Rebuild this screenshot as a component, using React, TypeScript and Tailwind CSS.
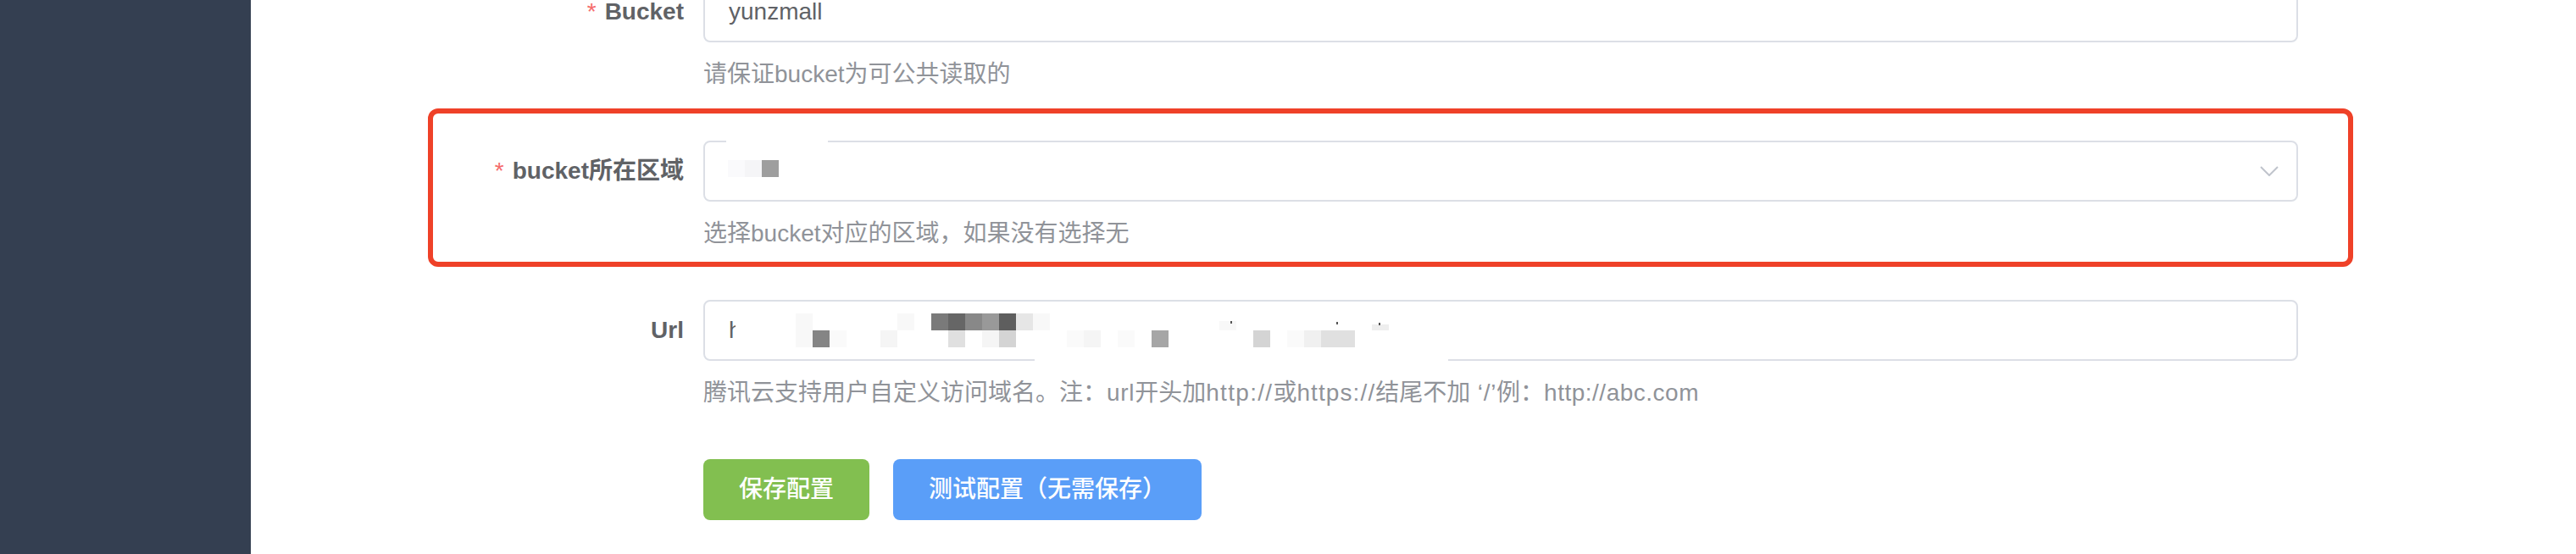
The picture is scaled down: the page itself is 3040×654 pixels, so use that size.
import React from "react";

const urlBlocks: [number, number, number, number, string][] = [
  // row 1
  [107, 14, 20, 20, "#f8f8f8"],
  [227, 14, 20, 20, "#f8f8f8"],
  [267, 14, 20, 20, "#7a7a7a"],
  [287, 14, 20, 20, "#666666"],
  [307, 14, 20, 20, "#888888"],
  [327, 14, 20, 20, "#999999"],
  [347, 14, 20, 20, "#5e5e5e"],
  [367, 14, 20, 20, "#e6e6e6"],
  [387, 14, 20, 20, "#f8f8f8"],
  [607, 23, 20, 11, "#f8f8f8"],
  [787, 27, 20, 7, "#eeeeee"],
  // row 2
  [107, 34, 20, 20, "#f8f8f8"],
  [127, 34, 20, 20, "#858585"],
  [147, 34, 20, 20, "#fafafa"],
  [207, 34, 20, 20, "#f5f5f5"],
  [287, 34, 20, 20, "#e0e0e0"],
  [327, 34, 20, 20, "#f5f5f5"],
  [347, 34, 20, 20, "#d4d4d4"],
  [427, 34, 20, 20, "#fafafa"],
  [447, 34, 20, 20, "#f5f5f5"],
  [487, 34, 20, 20, "#fafafa"],
  [527, 34, 20, 20, "#a6a6a6"],
  [647, 34, 20, 20, "#d4d4d4"],
  [687, 34, 20, 20, "#fafafa"],
  [707, 34, 20, 20, "#f0f0f0"],
  [727, 34, 40, 20, "#e0e0e0"],
  // specks
  [620, 23, 2, 3, "#555555"],
  [745, 24, 2, 3, "#555555"],
  [795, 25, 2, 3, "#555555"],
];

const selectBlocks: [number, string][] = [
  [27, "#fafafc"],
  [47, "#f5f5f7"],
  [67, "#9e9e9e"],
];

function Label({ text, required }: { text: string; required?: boolean }) {
  return (
    <div className="w-[300px] shrink-0 h-[72px] flex items-center justify-end pr-[23px] text-[28px] leading-none font-bold text-[#606266]">
      {required && <span className="text-[#f56c6c] mr-[10px] font-normal">*</span>}
      <span>{text}</span>
    </div>
  );
}

function Hint({ children }: { children: React.ReactNode }) {
  return <div className="mt-[18px] h-[40px] leading-[40px] text-[28px] text-[#909399] whitespace-nowrap">{children}</div>;
}

function Chevron() {
  return (
    <svg width="22" height="12" viewBox="0 0 22 12" fill="none">
      <polyline points="1,1 11,11 21,1" stroke="#c0c4cc" strokeWidth="2" />
    </svg>
  );
}

export default function App() {
  return (
    <div
      className="flex w-[3040px] h-[654px] overflow-hidden bg-white"
      style={{ fontFamily: '"Liberation Sans", "Noto Sans CJK SC", sans-serif' }}
    >
      <aside className="w-[296px] shrink-0 bg-[#343f51]" />

      <main className="flex-1 pl-[234px] pr-[328px]">
        <div className="-mt-[22px] flex flex-col gap-[58px]">
          {/* Bucket */}
          <div className="flex">
            <Label text="Bucket" required />
            <div className="flex-1">
              <div className="h-[72px] border-2 border-[#dcdfe6] rounded-[8px] px-[28px] flex items-center text-[28px] leading-none text-[#606266]">
                yunzmall
              </div>
              <Hint>请保证bucket为可公共读取的</Hint>
            </div>
          </div>

          {/* region */}
          <div className="relative flex">
            <div className="absolute -left-[25px] -top-[38px] -right-[65px] -bottom-[19px] border-[6px] border-[#ef4128] rounded-[12px] pointer-events-none" />
            <Label text="bucket所在区域" required />
            <div className="flex-1">
              <div className="relative h-[72px] border-2 border-[#dcdfe6] rounded-[8px] flex items-center justify-end pr-[21px]">
                <div className="absolute left-[25px] -top-[2px] w-[120px] h-[2px] bg-white" />
                {selectBlocks.map(([x, c]) => (
                  <div key={x} className="absolute top-[21px] w-[20px] h-[20px]" style={{ left: x, backgroundColor: c }} />
                ))}
                <Chevron />
              </div>
              <Hint>选择bucket对应的区域，如果没有选择无</Hint>
            </div>
          </div>

          {/* Url */}
          <div className="flex">
            <Label text="Url" />
            <div className="flex-1">
              <div className="relative h-[72px] border-2 border-[#dcdfe6] rounded-[8px] px-[28px] flex items-center text-[28px] leading-none text-[#606266]">
                <span className="inline-block w-[8px] overflow-hidden">h</span>
                <div className="absolute left-[389px] -bottom-[2px] w-[488px] h-[2px] bg-white" />
                {urlBlocks.map(([x, y, w, h, c], i) => (
                  <div
                    key={i}
                    className="absolute"
                    style={{ left: x, top: y, width: w, height: h, backgroundColor: c }}
                  />
                ))}
              </div>
              <Hint>
                腾讯云支持用户自定义访问域名。注：<span className="tracking-[0.7px]">url</span>开头加
                <span className="tracking-[1.3px]">http://</span>或<span className="tracking-[1.1px]">https://</span>
                结尾不加<span className="tracking-[0.7px]"> ‘/’</span>例：
                <span className="tracking-[0.5px]">http://abc.com</span>
              </Hint>
            </div>
          </div>

          {/* buttons */}
          <div className="flex">
            <div className="w-[300px] shrink-0" />
            <div className="flex gap-[28px]">
              <button className="h-[72px] px-[42px] rounded-[8px] bg-[#82bf50] text-white text-[28px] font-medium">
                保存配置
              </button>
              <button className="h-[72px] px-[42px] rounded-[8px] bg-[#5a9ef8] text-white text-[28px] font-medium">
                测试配置（无需保存）
              </button>
            </div>
          </div>
        </div>
      </main>
    </div>
  );
}
